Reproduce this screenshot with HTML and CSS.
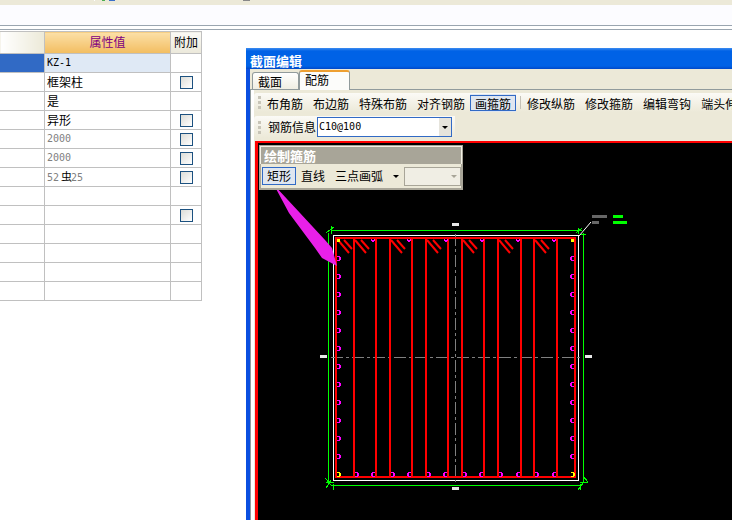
FILE: index.html
```html
<!DOCTYPE html>
<html lang="zh">
<head>
<meta charset="utf-8">
<title>截面编辑</title>
<link rel="stylesheet" href="styles.css">
</head>
<body>
<div class="page">
  <div class="top-strip"><i class="mark mark-white"></i><i class="mark mark-green"></i><i class="mark mark-blue"></i><i class="mark mark-dark"></i></div>
  <div class="top-band"></div>
  <div class="top-rule"></div>
  <table class="props">
    <colgroup><col class="c1"><col class="c2"><col class="c3"></colgroup>
    <thead>
      <tr><th class="h-name"></th><th class="h-val">属性值</th><th class="h-add">附加</th></tr>
    </thead>
    <tbody>
      <tr class="sel"><td class="name"></td><td class="val mono dark">KZ-1</td><td></td></tr>
      <tr><td></td><td class="val">框架柱</td><td class="chk"><span class="box"></span></td></tr>
      <tr><td></td><td class="val">是</td><td></td></tr>
      <tr><td></td><td class="val">异形</td><td class="chk"><span class="box"></span></td></tr>
      <tr><td></td><td class="val mono">2000</td><td class="chk"><span class="box"></span></td></tr>
      <tr><td></td><td class="val mono">2000</td><td class="chk"><span class="box"></span></td></tr>
      <tr><td></td><td class="val mono">52<span class="rebar">虫</span>25</td><td class="chk"><span class="box"></span></td></tr>
      <tr><td></td><td></td><td></td></tr>
      <tr><td></td><td></td><td class="chk"><span class="box"></span></td></tr>
      <tr><td></td><td></td><td></td></tr>
      <tr><td></td><td></td><td></td></tr>
      <tr><td></td><td></td><td></td></tr>
      <tr><td></td><td></td><td></td></tr>
    </tbody>
  </table>

  <section class="window">
    <header class="titlebar">截面编辑</header>
    <div class="client">
      <div class="tabs">
        <span class="tab">截面</span>
        <span class="tab tab-on">配筋</span>
      </div>
      <div class="tabpage">
        <div class="toolbar">
          <span class="grip"></span>
          <span class="btn">布角筋</span>
          <span class="btn">布边筋</span>
          <span class="btn">特殊布筋</span>
          <span class="btn">对齐钢筋</span>
          <span class="btn btn-on">画箍筋</span>
          <span class="sep"></span>
          <span class="btn">修改纵筋</span>
          <span class="btn">修改箍筋</span>
          <span class="btn">编辑弯钩</span>
          <span class="btn">端头伸缩</span>
        </div>
        <div class="toolbar toolbar-2">
          <span class="grip"></span>
          <span class="label">钢筋信息</span>
          <span class="combo"><span class="combo-text">C10@100</span><span class="combo-arrow"></span></span>
        </div>
        <div class="canvas">
          <svg class="cad" width="480" height="380" viewBox="258 143 480 380" shape-rendering="crispEdges">
            <defs>
              <path id="hook" fill="#ff00ff" fill-rule="evenodd" d="M0 -2H3V-1H4V2H3V3H0V2H2V-1H0Z"/>
              <path id="hook-l" fill="#ff00ff" fill-rule="evenodd" d="M4 -2H1V-1H0V2H1V3H4V2H2V-1H4Z"/>
              <path id="hook-d" fill="#ff00ff" d="M0 0H1V1H3V0H4V2H3V3H1V2H0Z"/>
              <path id="hook-y" fill="#ffff00" fill-rule="evenodd" d="M0 -2H3V-1H4V2H3V3H0V2H2V-1H0Z"/>
            </defs>
            <!-- green dimension lines -->
            <g stroke="#00ff00" fill="none">
              <path d="M331 230.5H582M331 485.5H582M328.5 233V482M583.5 233V482"/>
              <path d="M326 233L334 227M331 226V234M326 482H334M325 478L332 486M331 480L326 488M333 484V490M580 234H586M578 228V234M576 233L582 228M580 482H588M583 476L588 482M578 490L584 482M580 484V490"/>
            </g>
            <!-- white outline -->
            <rect x="333.5" y="235.5" width="245" height="245" fill="none" stroke="#fff"/>
            <!-- axis -->
            <path d="M455.5 234V482M331 357.5H580" stroke="#808080" stroke-dasharray="12 3 3 3" fill="none"/>
            <!-- stirrups -->
            <g stroke="#ff0000" stroke-width="2" fill="none">
              <path d="M335 238H576M335 477H576M336 238V477M575 238V477"/>
              <path d="M354 238V477M376 238V477M390 238V477M412 238V477M426 238V477M448 238V477M462 238V477M484 238V477M498 238V477M521 238V477M534 238V477M557 238V477"/>
            </g>
            <g stroke="#ff0000" stroke-width="2" fill="none" shape-rendering="auto">
              <path d="M338 240L349 253M344 240L352 249"/>
              <path d="M355 240L366 253M361 240L369 249"/>
              <path d="M391 240L402 253M397 240L405 249"/>
              <path d="M427 240L438 253M433 240L441 249"/>
              <path d="M463 240L474 253M469 240L477 249"/>
              <path d="M499 240L510 253M505 240L513 249"/>
              <path d="M535 240L546 253M541 240L549 249"/>
            </g>
            <!-- rebar hooks: left side -->
            <use href="#hook" x="337" y="258"/><use href="#hook" x="337" y="276"/><use href="#hook" x="337" y="294"/><use href="#hook" x="337" y="312"/><use href="#hook" x="337" y="330"/><use href="#hook" x="337" y="348"/><use href="#hook" x="337" y="366"/><use href="#hook" x="337" y="384"/><use href="#hook" x="337" y="402"/><use href="#hook" x="337" y="420"/><use href="#hook" x="337" y="438"/><use href="#hook" x="337" y="456"/>
            <!-- right side -->
            <use href="#hook-l" x="570" y="258"/><use href="#hook-l" x="570" y="276"/><use href="#hook-l" x="570" y="294"/><use href="#hook-l" x="570" y="312"/><use href="#hook-l" x="570" y="330"/><use href="#hook-l" x="570" y="348"/><use href="#hook-l" x="570" y="366"/><use href="#hook-l" x="570" y="384"/><use href="#hook-l" x="570" y="402"/><use href="#hook-l" x="570" y="420"/><use href="#hook-l" x="570" y="438"/><use href="#hook-l" x="570" y="456"/>
            <!-- top -->
            <use href="#hook-d" x="371" y="239"/><use href="#hook-d" x="407" y="239"/><use href="#hook-d" x="444" y="239"/><use href="#hook-d" x="480" y="239"/><use href="#hook-d" x="516" y="239"/><use href="#hook-d" x="552" y="239"/>
            <!-- bottom -->
            <use href="#hook" x="355" y="474"/><use href="#hook-l" x="371" y="474"/><use href="#hook" x="391" y="474"/><use href="#hook-l" x="407" y="474"/><use href="#hook" x="427" y="474"/><use href="#hook-l" x="443" y="474"/><use href="#hook" x="463" y="474"/><use href="#hook-l" x="479" y="474"/><use href="#hook" x="499" y="474"/><use href="#hook-l" x="516" y="474"/><use href="#hook" x="535" y="474"/><use href="#hook-l" x="552" y="474"/>
            <!-- yellow corners -->
            <g fill="#ffff00">
              <rect x="337" y="239" width="3" height="3"/><rect x="571" y="239" width="3" height="3"/>
            </g>
            <use href="#hook-y" x="337" y="474"/><use href="#hook-y" x="571" y="474"/>
            <!-- dimension labels -->
            <g fill="#e8e8e8">
              <rect x="452" y="223" width="7" height="3"/><rect x="452" y="487" width="7" height="3"/>
              <rect x="320" y="355" width="7" height="3"/><rect x="585" y="355" width="7" height="3"/>
            </g>
            <!-- leader and note -->
            <path d="M579 236L591 222" stroke="#fff" fill="none" shape-rendering="auto"/>
            <g fill="#666">
              <rect x="592" y="215" width="15" height="3"/><rect x="592" y="221" width="7" height="3"/>
            </g>
            <g fill="#00ff00">
              <rect x="613" y="215" width="10" height="3"/><rect x="613" y="221" width="14" height="3"/>
            </g>
            <!-- callout arrow -->
            <polygon points="274,185 300,213 325,240 332,248 337,266 322,258 315,248 289,213" fill="#e820e8" shape-rendering="auto"/>
          </svg>
          <div class="panel">
            <div class="panel-title">绘制箍筋</div>
            <div class="panel-body">
              <span class="pbtn pbtn-on">矩形</span>
              <span class="pbtn">直线</span>
              <span class="pbtn pbtn-wide">三点画弧</span>
              <span class="caret"></span>
              <span class="pcombo"><span class="caret caret-off"></span></span>
            </div>
          </div>
        </div>
      </div>
    </div>
  </section>
</div>
</body>
</html>
```
FILE: styles.css
```css
html, body {
  margin: 0;
  padding: 0;
  background: #fff;
}
.page {
  position: relative;
  width: 732px;
  height: 520px;
  overflow: hidden;
  font: 12px/1 "Noto Sans CJK SC", "Liberation Sans", sans-serif;
  color: #000;
}
.top-strip {
  position: relative;
  height: 5px;
  background: #ece9d8;
}
.mark {
  position: absolute;
  top: 0;
  height: 1px;
}
.mark-white { left: 94px; width: 1px; background: #fff; }
.mark-green { left: 102px; width: 3px; background: #4caf50; }
.mark-blue { left: 109px; width: 6px; background: #3a6fc8; }
.mark-dark { left: 243px; width: 7px; background: #888; }
.top-band {
  height: 20px;
  background: #fcfcff;
}
.top-rule {
  height: 3px;
  border-top: 1px solid #9aa5b0;
  border-bottom: 1px solid #9aa5b0;
  margin-bottom: 1px;
}

/* property grid */
.props {
  border-collapse: collapse;
  table-layout: fixed;
  width: 202px;
  margin-left: -1px;
  margin-top: 1px;
}
.c1 { width: 45px; }
.c2 { width: 126px; }
.c3 { width: 31px; }
.props th, .props td {
  border: 1px solid #c0c0c0;
  padding: 0;
  height: 18px;
  font-weight: 400;
}
.props th {
  box-sizing: border-box;
  height: 22px;
  padding-bottom: 2px;
}
.h-name { background: linear-gradient(90deg, #fff, #ece9d8); }
.h-val {
  background: linear-gradient(#fce0a8, #f2bd60);
  color: #800080;
  font-size: 12px;
}
.h-add { background: linear-gradient(#fbfaf5, #ebe8da); }
.val { padding-left: 2px !important; white-space: nowrap; }
.mono {
  font-family: "DejaVu Sans Mono", monospace;
  font-size: 10px;
  color: #808080;
}
.dark { color: #000; }
.rebar {
  font-family: "Noto Sans CJK SC", sans-serif;
  font-size: 11px;
  color: #000;
  margin: 0 -1px 0 2px;
}
.sel .name { background: #316ac5; }
.sel .val { background: #dfe9f5; }
.chk { text-align: center; }
.box {
  display: block;
  box-sizing: border-box;
  width: 13px;
  height: 13px;
  margin: 0 auto;
  border: 1px solid #1c5180;
  background: linear-gradient(135deg, #dcdcd7, #fff);
}

/* section editor window */
.window {
  position: absolute;
  left: 246px;
  top: 48px;
  width: 500px;
  height: 490px;
  background: #0a4fe0;
  box-sizing: border-box;
  padding: 0 0 0 4px;
}
.titlebar {
  height: 21px;
  margin-left: -4px;
  padding-left: 4px;
  background: linear-gradient(#3d8cf0 0, #0062e6 3px, #0062e6 18px, #0048c8 21px);
  color: #fff;
  font-weight: 700;
  font-size: 13px;
  line-height: 25px;
}
.client {
  height: 469px;
  background: #ece9d8;
}
.tabs {
  display: flex;
  align-items: flex-end;
  height: 20px;
  padding-left: 2px;
}
.tab {
  box-sizing: border-box;
  width: 47px;
  height: 17px;
  padding-left: 5px;
  border: 1px solid #919b9c;
  border-bottom: 0;
  border-radius: 3px 3px 0 0;
  background: linear-gradient(#fff, #f0eee2);
  line-height: 18px;
}
.tab-on {
  width: 51px;
  height: 20px;
  margin-bottom: -1px;
  border-top: 2px solid #ee9f30;
  background: #fcfcfa;
  line-height: 16px;
  position: relative;
}
.tabpage {
  border-top: 1px solid #919b9c;
  padding: 3px 0 0 4px;
  height: 448px;
  background: linear-gradient(90deg, #919b9c 0, #919b9c 1px, #fff 1px, #fff 4px, #ece9d8 4px);
}
.toolbar {
  display: flex;
  align-items: center;
  height: 19px;
  padding-left: 4px;
  white-space: nowrap;
  overflow: hidden;
  background: linear-gradient(#fbfaf6, #ece9d8);
  border-radius: 3px 0 0 3px;
}
.toolbar-2 {
  height: 22px;
  margin-top: 4px;
  width: 201px;
  box-sizing: border-box;
  flex: none;
}
.grip {
  width: 3px;
  height: 13px;
  margin-right: 1px;
  flex: none;
  background: repeating-linear-gradient(#c8c5b8 0 3px, transparent 3px 5px);
}
.btn {
  box-sizing: border-box;
  flex: none;
  padding: 0 5px;
  height: 18px;
  line-height: 17px;
  border: 1px solid transparent;
  border-width: 1px 0;
}
.btn-on {
  background: #dfe6f0;
  box-shadow: inset 0 0 0 1px #316ac5;
}
.sep {
  flex: none;
  width: 1px;
  height: 13px;
  margin: 0 1px 0 4px;
  background: #c5c2b8;
}
.label { margin: 0 1px 0 6px; flex: none; }
.combo {
  box-sizing: border-box;
  display: flex;
  align-items: center;
  width: 135px;
  height: 20px;
  flex: none;
  border: 1px solid #316ac5;
  background: #fff;
}
.combo-text {
  flex: 1;
  padding-left: 1px;
  font: 10px/18px "DejaVu Sans Mono", monospace;
}
.combo-arrow {
  position: relative;
  width: 12px;
  height: 18px;
  background: #e6e4dc;
}
.combo-arrow::after {
  content: "";
  position: absolute;
  left: 3px;
  top: 8px;
  border: 3px solid transparent;
  border-top: 3px solid #000;
  border-bottom: 0;
}
.canvas {
  position: relative;
  margin: 3px 0 0 1px;
  height: 380px;
  box-sizing: border-box;
  border-top: 2px solid #ff0000;
  border-left: 3px solid #ff0000;
  background: #000;
  overflow: hidden;
}
.cad { display: block; }
.panel {
  position: absolute;
  left: 1px;
  top: 2px;
  width: 204px;
  height: 45px;
  box-sizing: border-box;
  border: 2px solid #a8a598;
  background: #ece9d8;
}
.panel-title {
  height: 17px;
  background: #a8a598;
  border: 1px solid #f3f1e6;
  border-bottom: 0;
  margin: -1px -1px 0;
  padding-left: 3px;
  color: #fff;
  font-weight: 700;
  font-size: 13px;
  line-height: 18px;
}
.panel-body {
  display: flex;
  align-items: center;
  height: 24px;
  padding-left: 1px;
  background: #ece9d8;
}
.pbtn {
  box-sizing: border-box;
  flex: none;
  width: 34px;
  height: 18px;
  line-height: 17px;
  text-align: center;
}
.pbtn-on {
  background: #dfe6f0;
  border: 1px solid #316ac5;
  line-height: 15px;
}
.pbtn-wide { width: 58px; }
.caret {
  flex: none;
  width: 0;
  height: 0;
  margin-left: 5px;
  border: 3px solid transparent;
  border-top: 3px solid #000;
  border-bottom: 0;
}
.pcombo {
  box-sizing: border-box;
  display: flex;
  align-items: center;
  justify-content: flex-end;
  width: 58px;
  height: 19px;
  margin-left: 5px;
  border: 1px solid #a8a598;
  background: #f0eee4;
  padding-right: 3px;
}
.caret-off { border-top-color: #a8a598; margin: 0; }
```
